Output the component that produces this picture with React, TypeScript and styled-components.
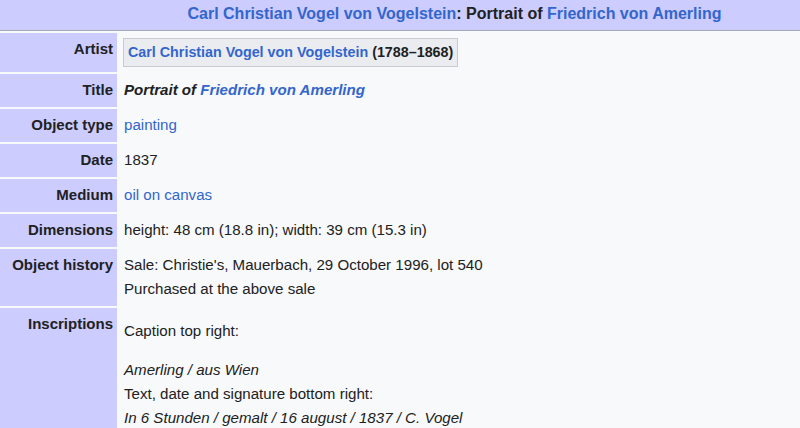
import React from 'react';
import styled, { createGlobalStyle } from 'styled-components';

const GlobalStyle = createGlobalStyle`
  html, body {
    margin: 0;
    padding: 0;
    background: #f8f9fa;
  }
  body {
    font-family: 'Liberation Sans', Arial, sans-serif;
    font-size: 15.1px;
    color: #202122;
  }
`;

// Info sheet: label column + value column
const Sheet = styled.div`
  display: grid;
  grid-template-columns: 117px 1fr;
  column-gap: 2px;
  row-gap: 2px;
  width: 800px;
  background: #f8f9fa;
`;

const Header = styled.div`
  grid-column: 1 / span 2;
  background: #ccccff;
  border-bottom: 1px solid #a2a9b1;
  text-align: center;
  font-weight: bold;
  font-size: 16px;
  line-height: 24px;
  padding: 2px 0 4px 109px;
  white-space: nowrap;
`;

const Label = styled.div`
  background: #ccccff;
  font-weight: bold;
  font-size: 15px;
  text-align: right;
  line-height: 24px;
  padding: 4px 4px 5px 0;
  white-space: nowrap;
`;

const Value = styled.div`
  line-height: 24px;
  padding: 4px 5px 5px;
`;

const CreatorValue = styled(Value)`
  padding: 5px 4px 5px;
`;

const Link = styled.span`
  color: #3366cc;
`;

const CreatorBox = styled.span`
  display: inline-block;
  padding: 1px 4px 2px;
  line-height: 24px;
  font-size: 14.3px;
  background: #eaecf0;
  border: 1px solid #c8ccd1;
  font-weight: bold;
`;

const Para = styled.p<{ $bottom?: number }>`
  margin: 7px 0 ${(p) => p.$bottom ?? 7}px;
`;

const Line = styled.div<{ $italic?: boolean }>`
  font-style: ${(p) => (p.$italic ? 'italic' : 'normal')};
`;

const App: React.FC = () => {
  const rows = [
    { label: 'Object type', value: <Link>painting</Link> },
    { label: 'Date', value: '1837' },
    { label: 'Medium', value: <Link>oil on canvas</Link> },
    { label: 'Dimensions', value: 'height: 48 cm (18.8 in); width: 39 cm (15.3 in)' }
  ];

  return (
    <>
      <GlobalStyle />
      <Sheet>
        <Header>
          <Link>Carl Christian Vogel von Vogelstein</Link>: Portrait of <Link>Friedrich von Amerling</Link>
        </Header>

        <Label>Artist</Label>
        <CreatorValue>
          <CreatorBox>
            <Link>Carl Christian Vogel von Vogelstein</Link> (1788–1868)
          </CreatorBox>
        </CreatorValue>

        <Label>Title</Label>
        <Value>
          <i>
            <b>
              Portrait of <Link>Friedrich von Amerling</Link>
            </b>
          </i>
        </Value>

        {rows.map((row) => (
          <React.Fragment key={row.label}>
            <Label>{row.label}</Label>
            <Value>{row.value}</Value>
          </React.Fragment>
        ))}

        <Label>Object history</Label>
        <Value>
          <Line>Sale: Christie's, Mauerbach, 29 October 1996, lot 540</Line>
          <Line>Purchased at the above sale</Line>
        </Value>

        <Label>Inscriptions</Label>
        <Value>
          <Para $bottom={15}>Caption top right:</Para>
          <Line $italic>Amerling / aus Wien</Line>
          <Line>Text, date and signature bottom right:</Line>
          <Line $italic>In 6 Stunden / gemalt / 16 august / 1837 / C. Vogel</Line>
        </Value>
      </Sheet>
    </>
  );
};

export default App;
